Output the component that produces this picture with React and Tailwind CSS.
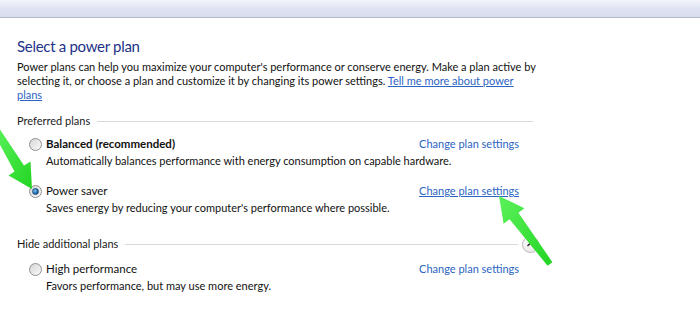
// Windows 7 style "Select a power plan" panel.

const FONT = { fontFamily: '"Segoe UI", Lato, "Open Sans", sans-serif' };

function Radio({ checked = false }) {
  return (
    <span className="relative w-[13px] h-[13px] rounded-full border border-[#8f8f8f] bg-gradient-to-br from-[#d6d6d6] to-[#f9f9f9] flex items-center justify-center shrink-0">
      {checked && (
        <span className="w-[7px] h-[7px] rounded-full bg-[radial-gradient(circle_at_35%_35%,#7fc2f0,#1a5e9e_70%)] border border-[#154a7d]" />
      )}
    </span>
  );
}

function GroupHeader({ label, width = 'w-[516px]', toggle = false }) {
  return (
    <div className={`flex items-center h-[16px] ${width}`}>
      <span className="text-[11px] leading-[16px] text-[#1a1a1a] whitespace-nowrap">
        {label}
      </span>
      <span className="flex-1 h-px bg-[#d9d9d9] ml-[7px]" />
      {toggle && (
        <span className="ml-[4px] w-[17px] h-[17px] rounded-full border border-[#b7b7b7] bg-gradient-to-b from-white to-[#e9e9e9] flex items-center justify-center">
          <svg width="7" height="5" viewBox="0 0 7 5">
            <path d="M0.5 4 L3.5 1 L6.5 4" stroke="#222" strokeWidth="1.4" fill="none" />
          </svg>
        </span>
      )}
    </div>
  );
}

function Plan({ name, desc, checked, bold, hover, className = '' }) {
  return (
    <div className={`w-[490px] ml-[12px] ${className}`}>
      <div className="flex items-center h-[16px]">
        <Radio checked={checked} />
        <span
          className={`ml-[4px] text-[11.5px] leading-[16px] text-[#111] ${bold ? 'font-bold' : ''}`}
        >
          {name}
        </span>
        <a
          className={`ml-auto text-[11px] leading-[16px] text-[#2b64c2] ${hover ? 'underline' : ''}`}
        >
          Change plan settings
        </a>
      </div>
      <p className="ml-[17px] mt-[2px] text-[11px] leading-[14px] text-[#111]">{desc}</p>
    </div>
  );
}

function Arrows() {
  return (
    <svg
      className="absolute inset-0 pointer-events-none"
      width="700"
      height="321"
      viewBox="0 0 700 321"
    >
      <defs>
        <linearGradient id="g1" x1="0" y1="0" x2="1" y2="1">
          <stop offset="0" stopColor="#5cf25c" />
          <stop offset="1" stopColor="#22d422" />
        </linearGradient>
      </defs>
      <polygon
        points="-7,132 14.5,171.5 8.5,175.5 32,189 30.5,161.5 24,165.5 -1,128"
        fill="url(#g1)"
      />
      <polygon
        points="552.4,262.2 518.4,212.7 524.4,208.2 499,196 503.6,223.8 509.6,219.3 547.6,265.8"
        fill="url(#g1)"
      />
    </svg>
  );
}

export default function App() {
  return (
    <div className="relative w-[700px] h-[321px] bg-white overflow-hidden" style={FONT}>
      <div className="h-[18px] bg-gradient-to-b from-[#f4f5fc] via-[#dfe3f3] to-[#d8ddf0] border-b border-[#b4b7c6]" />
      <div className="pl-[17px]">
        <h1 className="mt-[18px] text-[15px] leading-[20px] tracking-[-0.3px] text-[#1e3287]">
          Select a power plan
        </h1>
        <p className="mt-[4px] text-[11px] leading-[14px] text-[#111] whitespace-nowrap">
          Power plans can help you maximize your computer's performance or conserve energy. Make a plan active by
          <br />
          selecting it, or choose a plan and customize it by changing its power settings.{' '}
          <a className="text-[#2b64c2] underline">Tell me more about power</a>
          <br />
          <a className="text-[#2b64c2] underline">plans</a>
        </p>
        <div className="mt-[11px]">
          <GroupHeader label="Preferred plans" />
        </div>
        <Plan
          className="mt-[7px]"
          name="Balanced (recommended)"
          bold
          desc="Automatically balances performance with energy consumption on capable hardware."
        />
        <Plan
          className="mt-[15px]"
          name="Power saver"
          checked
          hover
          desc="Saves energy by reducing your computer's performance where possible."
        />
        <div className="mt-[21px]">
          <GroupHeader label="Hide additional plans" width="w-[522px]" toggle />
        </div>
        <Plan
          className="mt-[9px]"
          name="High performance"
          desc="Favors performance, but may use more energy."
        />
      </div>
      <Arrows />
    </div>
  );
}
